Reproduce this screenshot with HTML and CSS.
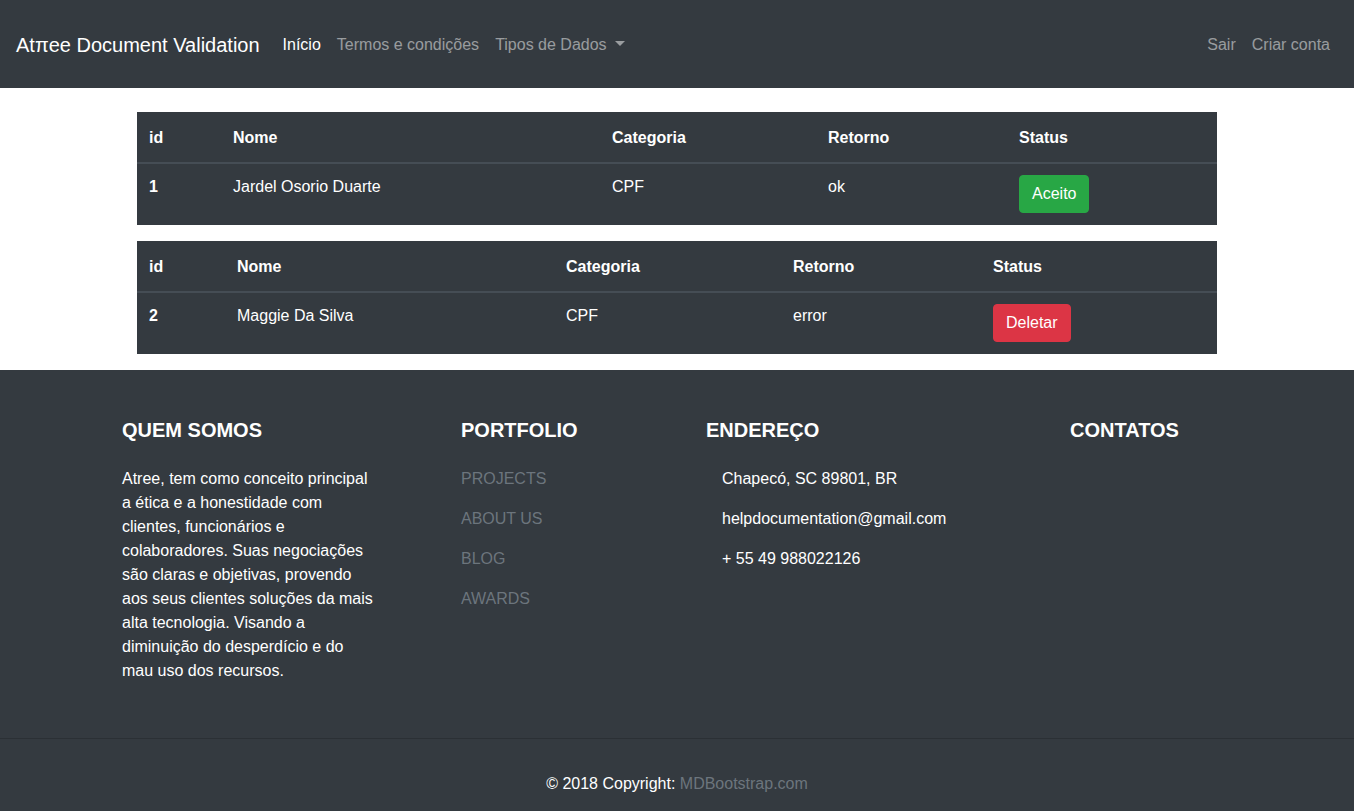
FILE: index.html
```html
<!DOCTYPE html>
<html lang="pt">
<head>
<meta charset="utf-8">
<title>Atree Document Validation</title>
<link rel="stylesheet" href="styles.css">
</head>
<body>
<nav class="navbar">
  <a class="brand" href="#">Atπee Document Validation</a>
  <ul class="nav-links">
    <li><a class="active" href="#">Início</a></li>
    <li><a href="#">Termos e condições</a></li>
    <li><a href="#" class="dropdown">Tipos de Dados</a></li>
  </ul>
  <ul class="nav-links nav-right">
    <li><a href="#">Sair</a></li>
    <li><a href="#">Criar conta</a></li>
  </ul>
</nav>

<main class="container">
  <div class="col">
    <table class="table t1">
      <colgroup><col class="c-id"><col class="c-nome"><col class="c-cat"><col class="c-ret"><col class="c-st"></colgroup>
      <thead><tr><th>id</th><th>Nome</th><th>Categoria</th><th>Retorno</th><th>Status</th></tr></thead>
      <tbody><tr><th>1</th><td>Jardel Osorio Duarte</td><td>CPF</td><td>ok</td><td><button class="btn btn-success">Aceito</button></td></tr></tbody>
    </table>
    <table class="table t2">
      <colgroup><col class="c-id"><col class="c-nome"><col class="c-cat"><col class="c-ret"><col class="c-st"></colgroup>
      <thead><tr><th>id</th><th>Nome</th><th>Categoria</th><th>Retorno</th><th>Status</th></tr></thead>
      <tbody><tr><th>2</th><td>Maggie Da Silva</td><td>CPF</td><td>error</td><td><button class="btn btn-danger">Deletar</button></td></tr></tbody>
    </table>
  </div>
</main>

<footer class="footer">
  <div class="footer-cols">
    <div class="fcol fcol-1">
      <h5>Quem somos</h5>
      <p>Atree, tem como conceito principal a ética e a honestidade com clientes, funcionários e colaboradores. Suas negociações são claras e objetivas, provendo aos seus clientes soluções da mais alta tecnologia. Visando a diminuição do desperdício e do mau uso dos recursos.</p>
    </div>
    <div class="fcol fcol-2">
      <h5>Portfolio</h5>
      <ul class="flinks">
        <li><a href="#">Projects</a></li>
        <li><a href="#">About us</a></li>
        <li><a href="#">Blog</a></li>
        <li><a href="#">Awards</a></li>
      </ul>
    </div>
    <div class="fcol fcol-3">
      <h5>Endereço</h5>
      <ul class="finfo">
        <li>Chapecó, SC 89801, BR</li>
        <li>helpdocumentation@gmail.com</li>
        <li>+ 55 49 988022126</li>
      </ul>
    </div>
    <div class="fcol fcol-4">
      <h5>Contatos</h5>
    </div>
  </div>
  <div class="copyright">© 2018 Copyright: <a href="#">MDBootstrap.com</a></div>
</footer>
</body>
</html>
```

FILE: styles.css
```css
* { box-sizing: border-box; }
html, body { margin: 0; padding: 0; }
body {
  font-family: "Liberation Sans", Arial, sans-serif;
  font-size: 16px;
  line-height: 24px;
  color: #212529;
  background: #fff;
}
a { text-decoration: none; }

.navbar {
  height: 88px;
  background: #343a40;
  display: flex;
  align-items: center;
  padding: 2px 16px 0;
}
.brand {
  color: #fff;
  font-size: 20px;
  line-height: 30px;
  margin-right: 15px;
}
.nav-links {
  list-style: none;
  margin: 0;
  padding: 0;
  display: flex;
}
.nav-links a {
  display: block;
  padding: 8px;
  color: rgba(255,255,255,.5);
}
.nav-links a.active { color: #fff; }
.nav-right { margin-left: auto; }
.dropdown::after {
  content: "";
  display: inline-block;
  margin-left: 8px;
  vertical-align: 4px;
  border-top: 5px solid;
  border-left: 5px solid transparent;
  border-right: 5px solid transparent;
}

.container {
  width: 1140px;
  margin: 0 auto;
  padding: 24px 15px 0;
}
.col { padding: 0 15px; }

.table {
  width: 100%;
  table-layout: fixed;
  border-collapse: collapse;
  background: #343a40;
  color: #fff;
  margin-bottom: 16px;
}
.table th, .table td {
  text-align: left;
  vertical-align: top;
  padding: 11px 12px 12px;
  border-top: 1px solid #454d55;
}
.table thead th { border-top: 0; border-bottom: 2px solid #454d55; padding-top: 14px; }
.table tbody th { font-weight: bold; }
.table td { font-weight: normal; }

.t1 .c-id { width: 84px; }
.t1 .c-nome { width: 379px; }
.t1 .c-cat { width: 216px; }
.t1 .c-ret { width: 191px; }
.t1 .c-st { width: 210px; }
.t2 .c-id { width: 88px; }
.t2 .c-nome { width: 329px; }
.t2 .c-cat { width: 227px; }
.t2 .c-ret { width: 200px; }
.t2 .c-st { width: 236px; }

.btn {
  font-family: inherit;
  font-size: 16px;
  line-height: 24px;
  padding: 6px 12px;
  border: 1px solid transparent;
  border-radius: 4px;
  color: #fff;
  cursor: pointer;
}
.btn-success { background: #28a745; border-color: #28a745; }
.btn-danger { background: #dc3545; border-color: #dc3545; }

.footer {
  background: #343a40;
  color: #fff;
}
.footer-cols {
  width: 1110px;
  margin: 0 auto;
  padding: 48px 0 55px;
  display: flex;
}
.fcol h5 {
  font-size: 20px;
  line-height: 24px;
  font-weight: bold;
  text-transform: uppercase;
  margin: 0 0 25px;
}
.fcol-1 { width: 339px; }
.fcol-1 p { width: 255px; margin: 0; }
.fcol-2 { width: 245px; }
.fcol-3 { width: 364px; }
.flinks, .finfo { list-style: none; margin: 0; padding: 0; }
.flinks li, .finfo li { margin-bottom: 16px; }
.flinks a { color: #6c757d; text-transform: uppercase; }
.finfo { padding-left: 16px; }

.copyright {
  border-top: 1px solid #2b3035;
  text-align: center;
  padding: 33px 0 16px;
}
.copyright a { color: #6c757d; }
```
